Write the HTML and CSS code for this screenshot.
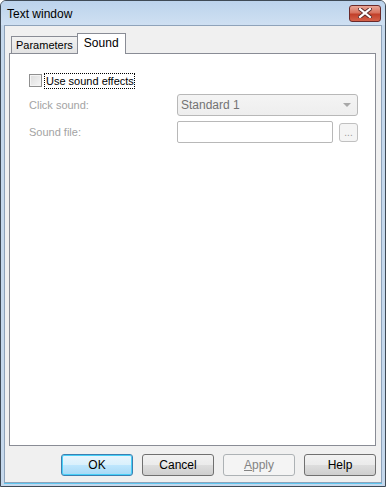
FILE: index.html
```html
<!DOCTYPE html>
<html>

<head>
    <meta charset="utf-8" />
    <title>Text window</title>
    <link rel="stylesheet" href="styles.css">
</head>

<body>
    <div class="window">
        <div class="titlebar">
            <span class="title">Text window</span>
            <button class="close">
                <svg width="14" height="10" viewBox="0 0 14 10">
                    <path d="M2 1 L12 9 M12 1 L2 9" stroke="#5a2a2a" stroke-width="4" stroke-linecap="square" />
                    <path d="M2 1 L12 9 M12 1 L2 9" stroke="#fff" stroke-width="2.2" stroke-linecap="square" />
                </svg>
            </button>
        </div>
        <div class="client">
            <div class="tabs">
                <div class="tab">Parameters</div>
                <div class="tab active">Sound</div>
            </div>
            <div class="panel">
                <div class="check-row">
                    <span class="checkbox"></span>
                    <span class="focus">Use sound effects</span>
                </div>
                <div class="field">
                    <span class="label">Click sound:</span>
                    <div class="combo">
                        <span>Standard 1</span>
                        <i class="caret"></i>
                    </div>
                </div>
                <div class="field">
                    <span class="label">Sound file:</span>
                    <div class="file-row">
                        <div class="edit"></div>
                        <div class="browse">...</div>
                    </div>
                </div>
            </div>
            <div class="buttons">
                <button class="btn default">OK</button>
                <button class="btn">Cancel</button>
                <button class="btn disabled"><u>A</u>pply</button>
                <button class="btn">Help</button>
            </div>
        </div>
    </div>
</body>

</html>
```

FILE: styles.css
```css
body {
    margin: 0;
    padding: 0;
    font-family: "Liberation Sans", Arial, sans-serif;
    font-size: 11px;
    color: #000;
}

.window {
    box-sizing: border-box;
    width: 386px;
    height: 487px;
    display: flex;
    flex-direction: column;
    border: 1px solid #3f4a56;
    border-radius: 6px 6px 0 0;
    background: #c5d8ec;
    padding: 0 3px 3px 3px;
}

.titlebar {
    height: 24px;
    display: flex;
    align-items: center;
    justify-content: space-between;
    background: linear-gradient(#bcd3ec, #cfe0f2);
    margin: 0 -3px;
    padding: 0 4px 0 6px;
    border-radius: 5px 5px 0 0;
}

.title {
    font-size: 12px;
    color: #000;
    margin-top: 1px;
}

.close {
    width: 32px;
    height: 17px;
    padding: 0;
    border: 1px solid #6a2a2a;
    border-radius: 3px;
    background: linear-gradient(#e9a697 0%, #d8735f 45%, #c2402a 55%, #d4624b 100%);
    display: flex;
    align-items: center;
    justify-content: center;
}

.client {
    flex: 1;
    display: flex;
    flex-direction: column;
    background: #f0f0f0;
    border: 1px solid #8fa3ba;
    padding: 6px 5px 6px 4px;
    box-shadow: 0 1px 0 #5fc6ef;
}

.tabs {
    display: flex;
    align-items: flex-end;
    height: 21px;
    padding-left: 2px;
    position: relative;
    z-index: 1;
}

.tab {
    font-size: 11px;
    height: 16px;
    line-height: 16px;
    padding: 0 4px;
    border: 1px solid #898c95;
    border-bottom: none;
    background: linear-gradient(#f2f2f2, #e3e3e3);
}

.tab.active {
    font-size: 12px;
    height: 20px;
    line-height: 18px;
    padding: 0 6px;
    background: #fff;
    margin-left: -1px;
    margin-bottom: -1px;
}

.panel {
    flex: 1;
    background: #fff;
    border: 1px solid #898c95;
    padding: 18px 17px 0 19px;
}

.check-row {
    display: flex;
    align-items: center;
    height: 17px;
    font-size: 11px;
}

.checkbox {
    box-sizing: border-box;
    width: 13px;
    height: 13px;
    border: 1px solid #8f8f8f;
    background: linear-gradient(135deg, #dcdcdc, #f6f6f6);
    box-shadow: inset 0 0 0 1px #f4f4f4;
    margin-right: 2px;
}

.focus {
    border: 1px dotted #000;
    padding: 0 0 0 1px;
    line-height: 14px;
}

.field {
    display: flex;
    align-items: center;
    justify-content: space-between;
    margin-top: 5px;
    font-size: 11px;
}

.label {
    color: #a3a3a3;
}

.combo {
    box-sizing: border-box;
    width: 181px;
    height: 22px;
    border: 1px solid #b8b8b8;
    border-radius: 3px;
    background: linear-gradient(#f4f4f4, #eeeeee);
    color: #737373;
    font-size: 12px;
    display: flex;
    align-items: center;
    justify-content: space-between;
    padding: 0 6px 0 3px;
}

.caret {
    width: 0;
    height: 0;
    border-left: 4px solid transparent;
    border-right: 4px solid transparent;
    border-top: 4px solid #a8a8a8;
}

.file-row {
    display: flex;
    align-items: center;
    width: 181px;
    justify-content: space-between;
}

.edit {
    box-sizing: border-box;
    width: 156px;
    height: 22px;
    border: 1px solid #b8b8b8;
    border-radius: 2px;
    background: #fff;
}

.browse {
    box-sizing: border-box;
    width: 19px;
    height: 19px;
    border: 1px solid #c0c0c0;
    border-radius: 3px;
    background: #f4f4f4;
    color: #9a9a9a;
    font-size: 10px;
    text-align: center;
    line-height: 17px;
}

.buttons {
    display: flex;
    justify-content: flex-end;
    gap: 9px;
    padding-top: 8px;
}

.btn {
    box-sizing: border-box;
    width: 72px;
    height: 22px;
    font-family: "Liberation Sans", Arial, sans-serif;
    font-size: 12px;
    color: #000;
    border: 1px solid #707070;
    border-radius: 3px;
    background: linear-gradient(#f2f2f2 0%, #ebebeb 50%, #dddddd 51%, #cfcfcf 100%);
    padding: 0;
}

.btn.default {
    border-color: #3c7fb1;
    background: linear-gradient(#eaf6fd 0%, #d9f0fc 50%, #bee6fd 51%, #a7d9f5 100%);
    box-shadow: inset 0 0 0 1px #48d0f8;
}

.btn.disabled {
    border-color: #adb2b5;
    background: #f4f4f4;
    color: #838383;
}
```
